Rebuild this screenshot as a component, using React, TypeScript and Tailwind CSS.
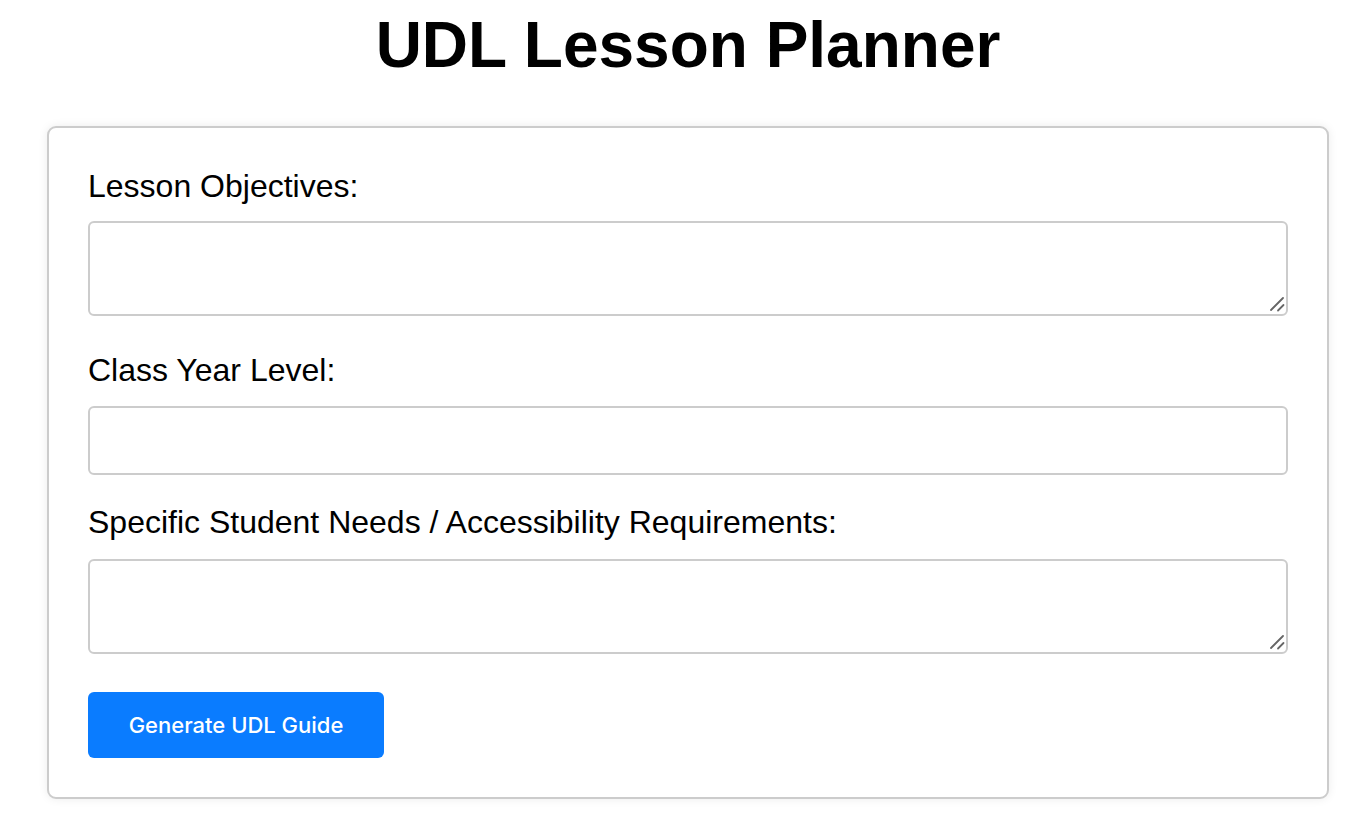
import React from "react";

function Grip() {
  return (
    <svg
      className="pointer-events-none absolute bottom-[4px] right-[3px]"
      width="16"
      height="16"
      viewBox="0 0 16 16"
    >
      <line x1="2" y1="14" x2="14" y2="2" stroke="#666666" strokeWidth="1.8" strokeLinecap="round" />
      <line x1="9" y1="14.5" x2="14.5" y2="9" stroke="#666666" strokeWidth="1.8" strokeLinecap="round" />
    </svg>
  );
}

export default function App() {
  return (
    <div className="min-h-[834px] bg-white pl-[47px] pr-[43px]" style={{ fontFamily: '"Liberation Sans", Arial, sans-serif' }}>
      <h1 className="mt-[8px] mb-[44px] text-center text-[64px] font-bold leading-[74px] text-black">
        UDL Lesson Planner
      </h1>
      <div className="w-[1282px] rounded-[9px] border-2 border-[#cccccc] bg-white px-[39px] pt-[40px] pb-[39px] shadow-[0_0_10px_rgba(0,0,0,0.08)]">
        <label className="mb-[16px] block text-[32px] leading-[37px] text-black">Lesson Objectives:</label>
        <div className="relative mb-[36px]">
          <textarea className="block h-[95px] w-full resize-none rounded-[6px] border-2 border-[#cccccc] bg-white p-[10px] text-[20px]" />
          <Grip />
        </div>
        <label className="mb-[17px] block text-[32px] leading-[37px] text-black">Class Year Level:</label>
        <input type="text" className="mb-[29px] block h-[69px] w-full rounded-[6px] border-2 border-[#cccccc] bg-white px-[10px] text-[20px]" />
        <label className="mb-[18px] block text-[32px] leading-[37px] text-black">Specific Student Needs / Accessibility Requirements:</label>
        <div className="relative mb-[38px]">
          <textarea className="block h-[95px] w-full resize-none rounded-[6px] border-2 border-[#cccccc] bg-white p-[10px] text-[20px]" />
          <Grip />
        </div>
        <button
          type="button"
          className="block h-[66px] w-[296px] rounded-[6px] bg-[#0a7cff] text-[22px] font-medium text-white"
          style={{ fontFamily: 'Inter, "Noto Sans", sans-serif' }}
        >
          Generate UDL Guide
        </button>
      </div>
    </div>
  );
}
